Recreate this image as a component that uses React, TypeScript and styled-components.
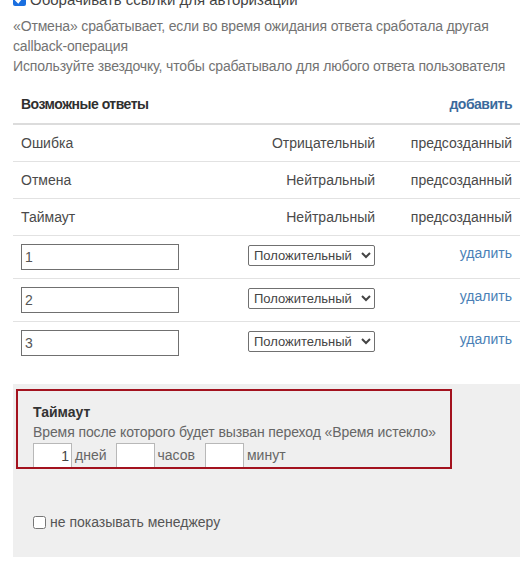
import React from 'react';
import styled, { createGlobalStyle } from 'styled-components';

const GlobalStyle = createGlobalStyle`
  html, body {
    margin: 0;
    padding: 0;
    background: #fff;
    overflow: hidden;
  }
  body {
    font-family: 'Liberation Sans', Arial, sans-serif;
    color: #555;
  }
`;

const Page = styled.div`
  width: 507px;
  margin: -11px 0 0 13px;
`;

const TopCheck = styled.label`
  display: flex;
  align-items: center;
  gap: 4px;
  height: 20px;
  font-size: 15px;
  color: #444;

  input {
    margin: 0;
    width: 13px;
    height: 13px;
    accent-color: #1a6fe0;
  }
`;

const Help = styled.div`
  margin-top: 7px;
  font-size: 14px;
  line-height: 20px;
  letter-spacing: -0.15px;
  color: #737373;
`;

const Table = styled.table`
  width: 507px;
  margin-top: 8px;
  border-collapse: collapse;
  table-layout: fixed;
  font-size: 14px;
  line-height: 20px;
  color: #4a4a4a;
`;

const HeadCell = styled.th<{ $right?: boolean }>`
  padding: 10px 8px 9px;
  text-align: ${(p) => (p.$right ? 'right' : 'left')};
  font-weight: bold;
  letter-spacing: -0.5px;
  color: #2f2f2f;
  border-bottom: 2px solid #dcdcdc;
`;

const AddLink = styled.a`
  color: #3a6a9c;
  text-decoration: none;
  cursor: pointer;
`;

const Row = styled.tr<{ $last?: boolean }>`
  border-bottom: ${(p) => (p.$last ? 'none' : '1px solid #e2e2e2')};
`;

const Cell = styled.td<{ $align?: 'left' | 'right'; $top?: number }>`
  padding: ${(p) => (p.$top !== undefined ? `${p.$top}px 8px 8px` : '8px')};
  text-align: ${(p) => p.$align || 'left'};
  vertical-align: ${(p) => (p.$top !== undefined ? 'top' : 'middle')};
  white-space: nowrap;
`;

const NameInput = styled.input`
  display: block;
  box-sizing: border-box;
  width: 158px;
  height: 26px;
  margin: 0;
  padding: 1px 3px;
  border: 1px solid #707070;
  border-radius: 0;
  font-family: 'Liberation Sans', Arial, sans-serif;
  font-size: 14px;
  color: #555;
`;

const TypeSelect = styled.select`
  display: block;
  box-sizing: border-box;
  width: 127px;
  height: 21px;
  margin: 0;
  padding: 0 0 0 1px;
  border: 1px solid #707070;
  border-radius: 2px;
  background: #fff;
  font-family: 'Liberation Sans', Arial, sans-serif;
  font-size: 13px;
  color: #444;
`;

const DeleteLink = styled.a`
  color: #4a7fb6;
  text-decoration: none;
  font-size: 14px;
  cursor: pointer;
`;

const Panel = styled.div`
  margin-top: 20px;
  padding: 5px 0 25px 3px;
  background: #efefef;
`;

const Highlight = styled.div`
  box-sizing: border-box;
  width: 436px;
  height: 80px;
  padding: 11px 0 0 15px;
  border: 2px solid #a3121e;
  overflow: hidden;
  font-size: 14px;
  line-height: 20px;
  color: #666;
`;

const Title = styled.div`
  font-weight: bold;
  color: #333;
`;

const Description = styled.div`
  letter-spacing: -0.1px;
`;

const Fields = styled.div`
  display: flex;
  align-items: flex-start;
  margin-top: 1px;
`;

const NumInput = styled.input`
  box-sizing: border-box;
  width: 39px;
  height: 26px;
  margin: 0 3px 0 0;
  padding: 1px 2px;
  border: 1px solid #b8b8b8;
  border-radius: 0;
  background: #fff;
  text-align: right;
  font-family: 'Liberation Sans', Arial, sans-serif;
  font-size: 14px;
  color: #444;
`;

const Unit = styled.span<{ $gap: number }>`
  margin: 2px ${(p) => p.$gap}px 0 0;
`;

const HideCheck = styled.label`
  display: flex;
  align-items: center;
  gap: 4px;
  margin-top: 43px;
  padding-left: 17px;
  font-size: 14px;
  line-height: 20px;
  color: #555;

  input {
    margin: 0;
    width: 13px;
    height: 13px;
  }
`;

type Answer = { name: string; kind: string };

const predefined: Answer[] = [
  { name: 'Ошибка', kind: 'Отрицательный' },
  { name: 'Отмена', kind: 'Нейтральный' },
  { name: 'Таймаут', kind: 'Нейтральный' },
];

const custom = ['1', '2', '3'];

export default function App() {
  return (
    <>
      <GlobalStyle />
      <Page>
        <TopCheck>
          <input type='checkbox' defaultChecked />
          Оборачивать ссылки для авторизации
        </TopCheck>
        <Help>
          «Отмена» срабатывает, если во время ожидания ответа сработала другая callback-операция
          <br />
          Используйте звездочку, чтобы срабатывало для любого ответа пользователя
        </Help>

        <Table>
          <colgroup>
            <col style={{ width: 227 }} />
            <col style={{ width: 143 }} />
            <col style={{ width: 137 }} />
          </colgroup>
          <thead>
            <tr>
              <HeadCell colSpan={2}>Возможные ответы</HeadCell>
              <HeadCell $right>
                <AddLink>добавить</AddLink>
              </HeadCell>
            </tr>
          </thead>
          <tbody>
            {predefined.map((a) => (
              <Row key={a.name}>
                <Cell>{a.name}</Cell>
                <Cell $align='right'>{a.kind}</Cell>
                <Cell $align='right'>предсозданный</Cell>
              </Row>
            ))}
            {custom.map((v, i) => (
              <Row key={v} $last={i === custom.length - 1}>
                <Cell>
                  <NameInput defaultValue={v} />
                </Cell>
                <Cell $top={9}>
                  <TypeSelect defaultValue='positive'>
                    <option value='positive'>Положительный</option>
                    <option value='neutral'>Нейтральный</option>
                    <option value='negative'>Отрицательный</option>
                  </TypeSelect>
                </Cell>
                <Cell $align='right' $top={7}>
                  <DeleteLink>удалить</DeleteLink>
                </Cell>
              </Row>
            ))}
          </tbody>
        </Table>

        <Panel>
          <Highlight>
            <Title>Таймаут</Title>
            <Description>Время после которого будет вызван переход «Время истекло»</Description>
            <Fields>
              <NumInput defaultValue='1' />
              <Unit $gap={9}>дней</Unit>
              <NumInput defaultValue='' />
              <Unit $gap={10}>часов</Unit>
              <NumInput defaultValue='' />
              <Unit $gap={0}>минут</Unit>
            </Fields>
          </Highlight>
          <HideCheck>
            <input type='checkbox' />
            не показывать менеджеру
          </HideCheck>
        </Panel>
      </Page>
    </>
  );
}
